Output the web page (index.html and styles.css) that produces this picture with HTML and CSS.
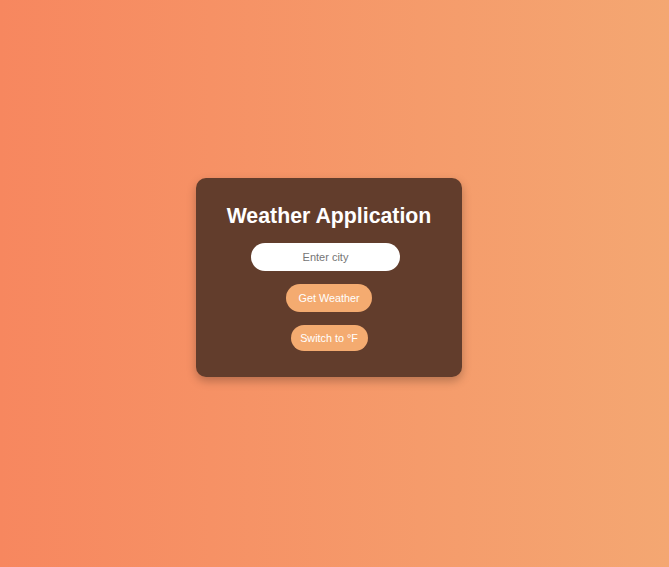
FILE: index.html
```html
<!DOCTYPE html>
<html lang="en">
<head>
<meta charset="utf-8">
<title>Weather Application</title>
<link rel="stylesheet" href="styles.css">
</head>
<body>
<main class="stage">
  <section class="card">
    <h1 class="title">Weather Application</h1>
    <input class="city" type="text" placeholder="Enter city">
    <button class="btn btn-get" type="button">Get Weather</button>
    <button class="btn btn-unit" type="button">Switch to °F</button>
  </section>
</main>
</body>
</html>
```

FILE: styles.css
```css
html, body {
  margin: 0;
  padding: 0;
  height: 100%;
}
body {
  background: linear-gradient(to right, #f7875f, #f4a772);
  font-family: "Liberation Sans", Arial, sans-serif;
}
.stage {
  box-sizing: border-box;
  height: 100%;
  display: flex;
  align-items: center;
  justify-content: center;
  padding: 0 11px 12px 0;
}
.card {
  box-sizing: border-box;
  width: 266px;
  height: 199px;
  background: #623d2c;
  border-radius: 10px;
  box-shadow: 0 4px 10px rgba(0, 0, 0, 0.25);
  padding: 26px 20px;
  display: flex;
  flex-direction: column;
  align-items: center;
}
.title {
  margin: 0;
  color: #ffffff;
  font-size: 21.3px;
  font-weight: bold;
  line-height: 24px;
}
.city {
  box-sizing: border-box;
  margin: 15px 7px 0 0;
  width: 149px;
  height: 28px;
  border: none;
  border-radius: 14px;
  background: #ffffff;
  text-align: center;
  font-family: "Liberation Sans", Arial, sans-serif;
  font-size: 11px;
  color: #333;
  outline: none;
  padding: 0 10px;
}
.city::placeholder {
  color: #757575;
}
.btn {
  box-sizing: border-box;
  border: none;
  background: #f4ab70;
  color: #ffffff;
  font-family: "Liberation Sans", Arial, sans-serif;
  font-size: 10.8px;
  white-space: nowrap;
  height: 27px;
  border-radius: 14px;
  padding: 0;
  margin-top: 13px;
  cursor: pointer;
}
.btn-get {
  width: 86px;
  height: 28px;
}
.btn-unit {
  width: 77px;
  height: 26px;
}
```
